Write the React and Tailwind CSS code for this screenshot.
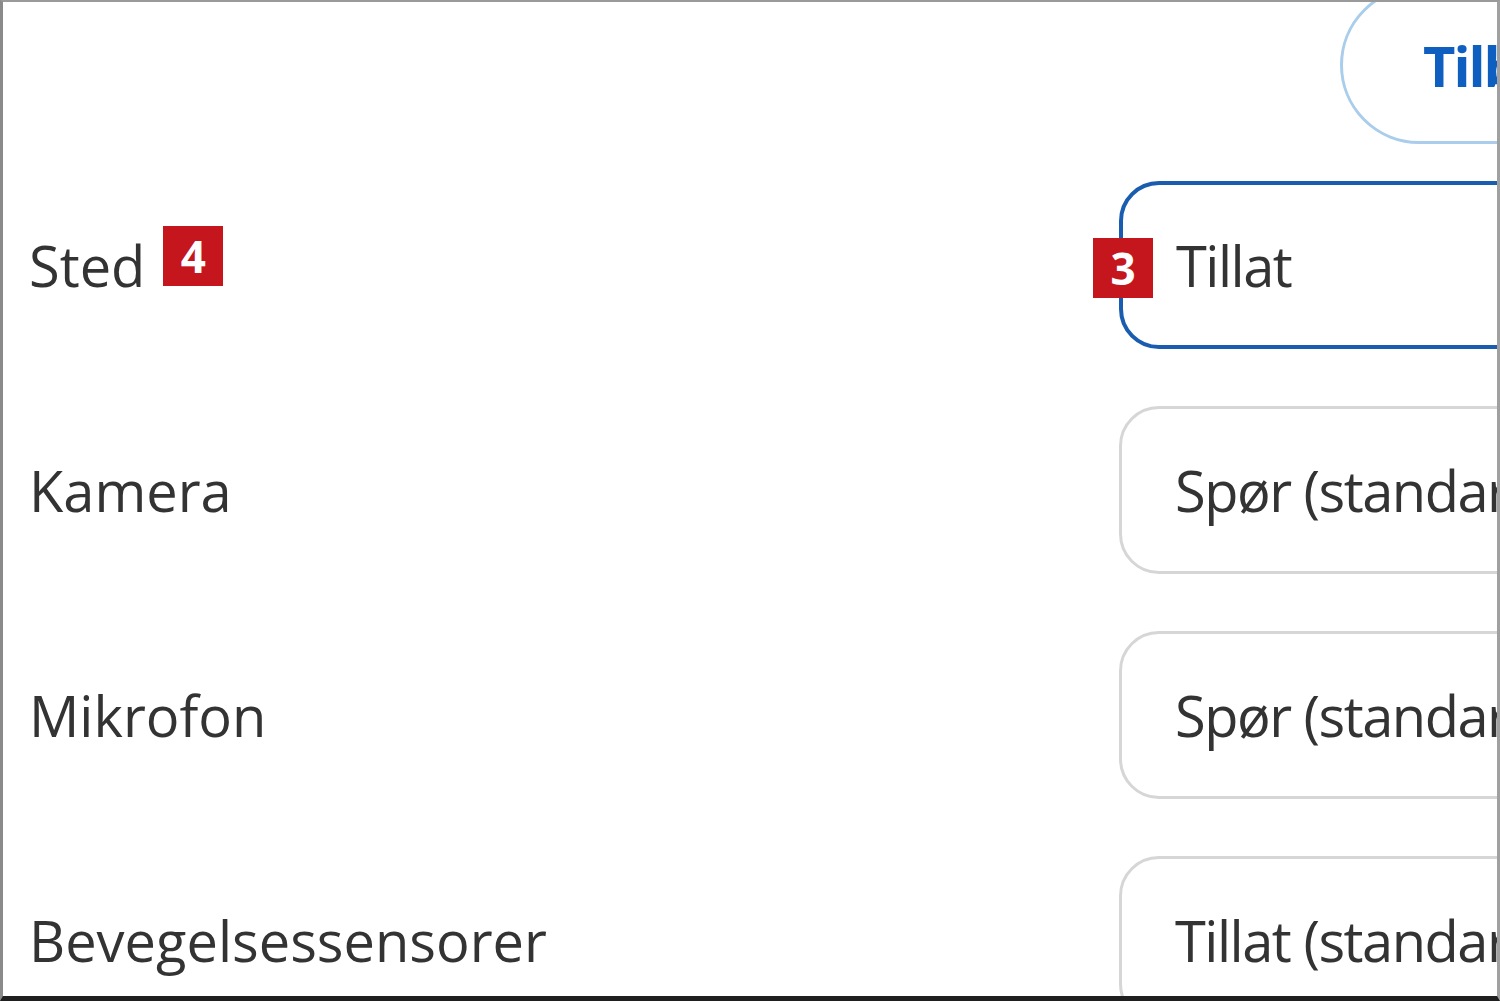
import React from 'react';

const rows = [
  { label: 'Sted', value: 'Tillat', focused: true, labelBadge: '4', valueBadge: '3' },
  { label: 'Kamera', value: 'Spør (standard)' },
  { label: 'Mikrofon', value: 'Spør (standard)' },
  { label: 'Bevegelsessensorer', value: 'Tillat (standard)' },
];

const Badge = ({ children, className = '' }) => (
  <span
    className={`flex h-[60px] w-[60px] items-center justify-center bg-[#c4161c] text-[44px] font-bold leading-none text-white ${className}`}
  >
    {children}
  </span>
);

const App = () => {
  return (
    <div
      className="flex h-[1001px] w-[1500px] flex-col overflow-hidden border-t-2 border-r-[3px] border-b-[5px] border-l-[3px] border-t-[#9a9a9a] border-r-[#a0a0a0] border-b-[#1f1f1f] border-l-[#8a8a8a] bg-white text-[#333333]"
      style={{ fontFamily: '"Open Sans", "Noto Sans", sans-serif' }}
    >
      {/* Reset button, cut off at the right edge */}
      <div className="flex shrink-0">
        <button className="ml-[1337px] -mt-[16px] flex h-[158px] shrink-0 items-center whitespace-nowrap rounded-full border-[3px] border-[#a9cdeb] pl-[80px] pr-[80px] text-[56px] font-bold tracking-[-2px] text-[#0f5fc0]">
          Tilbakestill tillatelser
        </button>
      </div>

      {/* Permission rows */}
      <div className="mt-[37px] flex flex-col gap-[57px]">
        {rows.map((row) => (
          <div key={row.label} className="flex shrink-0 items-center">
            <div className="flex w-[1116px] shrink-0 items-center gap-[18px] pl-[26px]">
              <span className="text-[56px] leading-none">{row.label}</span>
              {row.labelBadge && <Badge className="mb-[18px]">{row.labelBadge}</Badge>}
            </div>
            <div
              className={`relative flex h-[168px] w-[480px] shrink-0 items-center rounded-[40px] bg-white pl-[53px] ${
                row.focused ? 'border-4 border-[#1a5cb0]' : 'border-[3px] border-[#d6d6d6]'
              }`}
            >
              {row.valueBadge && (
                <Badge className="absolute -left-[30px] top-[53px]">{row.valueBadge}</Badge>
              )}
              <span className="whitespace-nowrap text-[56px] leading-none tracking-[-1.5px]">{row.value}</span>
            </div>
          </div>
        ))}
      </div>
    </div>
  );
};

export default App;
